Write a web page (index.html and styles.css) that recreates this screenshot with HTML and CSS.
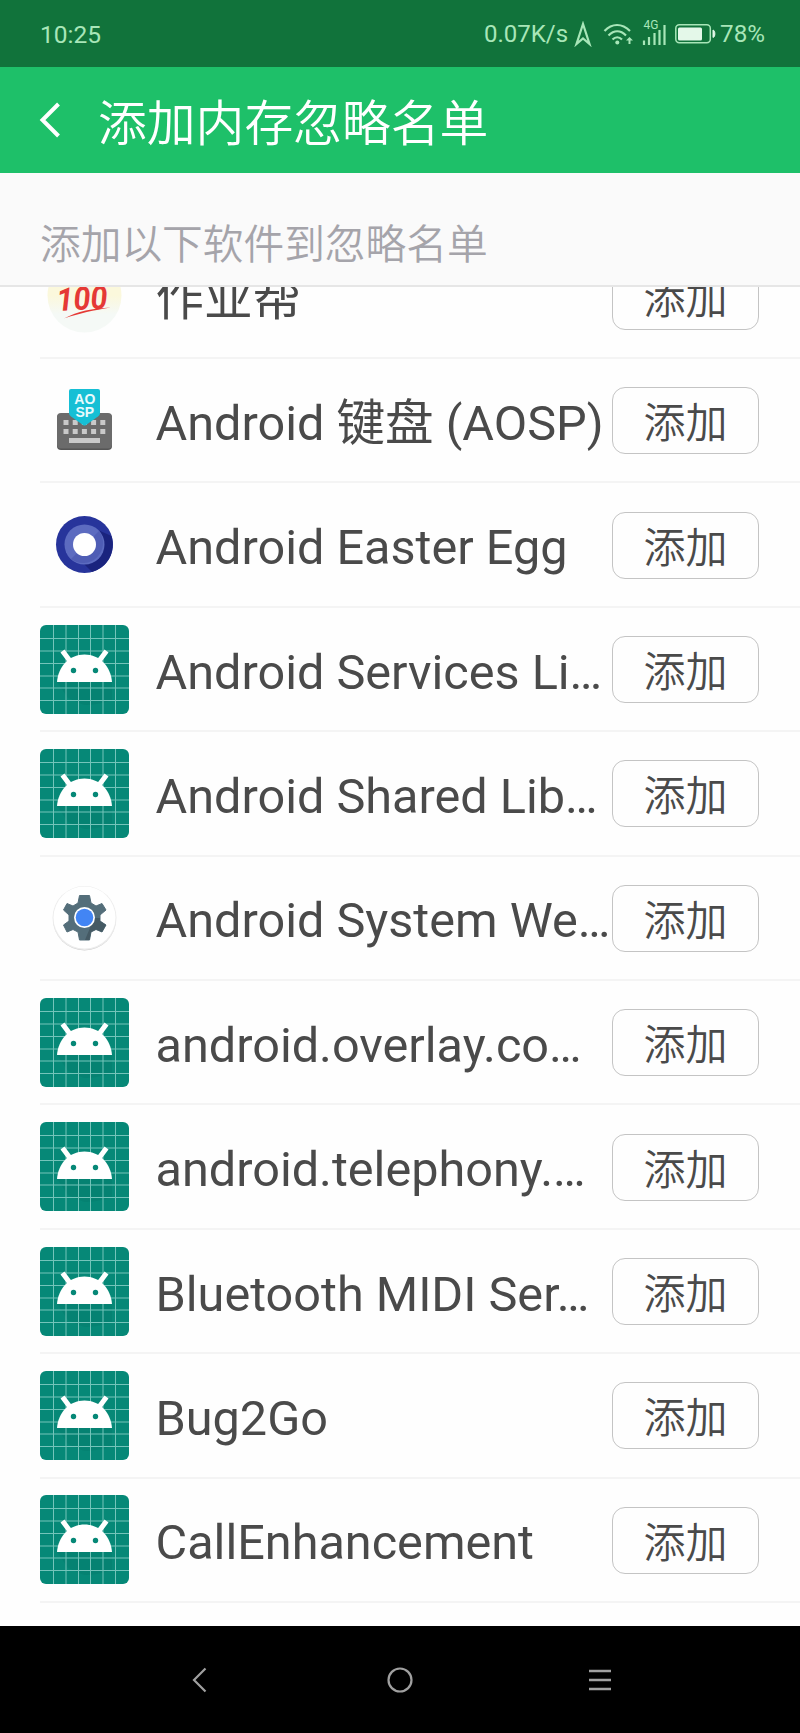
FILE: index.html
```html
<!DOCTYPE html>
<html lang="zh-CN">
<head>
    <meta charset="UTF-8">
    <meta name="viewport" content="width=device-width, initial-scale=1.0">
    <title>添加内存忽略名单</title>
    <link rel="stylesheet" href="styles.css">
</head>
<body>
    <!-- 图标定义 -->
    <svg class="icon-defs" width="0" height="0">
        <symbol id="icon-robot" viewBox="0 0 89 89">
            <rect width="89" height="89" rx="6" fill="#068877"/>
            <path d="M17 57H72V75Q58 80 44 80L28 73Z" fill="#047a6b" opacity=".4"/>
            <path d="M13.5 0V89M26 0V89M38.5 0V89M50.5 0V89M63 0V89M75.5 0V89M0 13.5H89M0 26H89M0 38.5H89M0 51H89M0 63H89M0 75.5H89" stroke="#74c4ba" stroke-width="1" fill="none"/>
            <path d="M24 28L30 36M65 28L59 36" stroke="#fff" stroke-width="5" stroke-linecap="square" fill="none"/>
            <path d="M17 57C18 42 29 29.500 44.500 29.500S71 42 72 57Z" fill="#fff"/>
            <circle cx="33.5" cy="45.5" r="2.7" fill="#068877"/>
            <circle cx="55.5" cy="45.5" r="2.7" fill="#068877"/>
        </symbol>
    </svg>

    <div class="status-bar">
        <span class="status-time">10:25</span>
        <div class="status-right">
            <span class="status-speed">0.07K/s</span>
            <svg class="status-nav" width="18" height="26" viewBox="0 0 18 26">
                <path d="M9 3L2.500 23L9 17.500L15.500 23Z" fill="none" stroke="#a8e6b8" stroke-width="2.2"/>
            </svg>
            <svg class="status-wifi" width="31" height="24" viewBox="0 0 31 24">
                <path d="M1.500 9C9 1 19 1 27 9M5.500 13.500C11 8 17.500 8 23 13.500M9.500 17.500C12.500 14.500 16 14.500 19 17.500" fill="none" stroke="#a8e6b8" stroke-width="2.2"/>
                <circle cx="14.3" cy="20.5" r="2" fill="#a8e6b8"/>
                <path d="M26.500 22V17" stroke="#a8e6b8" stroke-width="2"/>
                <path d="M23 18.500L26.500 15L30 18.500Z" fill="#a8e6b8"/>
            </svg>
            <svg class="status-signal" width="25" height="28" viewBox="0 0 25 28">
                <text x="1.5" y="11" class="signal-text">4G</text>
                <path d="M2 27V22.500M7 27V19M12.500 27V15M17.500 27V12M22.500 27V7" stroke="#a8e6b8" stroke-width="2.2"/>
            </svg>
            <svg class="status-battery" width="41" height="20" viewBox="0 0 41 20">
                <rect x="0.8" y="0.8" width="34.5" height="18" rx="3.5" fill="none" stroke="#a8e6b8" stroke-width="1.5"/>
                <rect x="3" y="3.5" width="24" height="13" rx="1.5" fill="#e4f8e9"/>
                <path d="M38 6C40.500 6.500 40.500 13 38 13.500Z" fill="#e4f8e9" stroke="#e4f8e9"/>
            </svg>
            <span class="status-percent">78%</span>
        </div>
    </div>

    <div class="header">
        <svg class="header-back" width="24" height="38" viewBox="0 0 24 38">
            <path d="M20.500 3L4.500 19L20.500 35" fill="none" stroke="#fff" stroke-width="4"/>
        </svg>
        <h1 class="header-title">添加内存忽略名单</h1>
    </div>

    <div class="section-title">添加以下软件到忽略名单</div>

    <div class="app-list">
        <div class="app-item">
            <svg class="app-icon" viewBox="0 0 89 89">
                <defs>
                    <linearGradient id="zyb" x1="0" y1="0" x2="0" y2="1">
                        <stop offset=".5" stop-color="#fbf8dc"/>
                        <stop offset=".75" stop-color="#f5f9f6"/>
                    </linearGradient>
                </defs>
                <circle cx="44.5" cy="44.5" r="37" fill="url(#zyb)"/>
                <text x="17" y="58.5" class="score-text" textLength="51" lengthAdjust="spacingAndGlyphs" transform="rotate(-3 44 58)">100</text>
                <path d="M24 67.500C38 60 52 57.500 71 56.500C53 59.500 40 62 24 67.500Z" fill="#e53935"/>
            </svg>
            <span class="app-name">作业帮</span>
            <button class="add-button">添加</button>
        </div>
        <div class="app-item">
            <svg class="app-icon" viewBox="0 0 89 89">
                <rect x="17" y="38" width="55" height="36" rx="4" fill="#555"/>
                <rect x="17" y="37" width="55" height="35.5" rx="4" fill="#6b6b6b"/>
                <path d="M23.500 46.500H65.500M23.500 55.500H65.500" stroke="#c9c9c9" stroke-width="5" stroke-dasharray="5 4.2" fill="none"/>
                <rect x="29" y="62" width="31" height="5" fill="#c9c9c9"/>
                <path d="M31 13H58Q60 13 60 15V37Q60 39 58 40.500L46 49Q44.500 50 43 49L31 40.500Q29 39 29 37V15Q29 13 31 13Z" fill="#16bfd5"/>
                <text x="44.8" y="28" class="aosp-text">AO</text>
                <text x="44.8" y="40.5" class="aosp-text">SP</text>
            </svg>
            <span class="app-name">Android 键盘 (AOSP)</span>
            <button class="add-button">添加</button>
        </div>
        <div class="app-item">
            <svg class="app-icon" viewBox="0 0 89 89">
                <circle cx="44.5" cy="44.5" r="28.5" fill="#27349b"/>
                <path d="M58 30L71.500 36A28.500 28.500 0 0 1 52 72L44 64Z" fill="#1a237e"/>
                <circle cx="44.5" cy="44.5" r="20" fill="#5c6bc0"/>
                <path d="M59 31A20 20 0 0 1 31 59Z" fill="#4f5db5"/>
                <circle cx="44.5" cy="44.5" r="11.5" fill="#fff"/>
            </svg>
            <span class="app-name">Android Easter Egg</span>
            <button class="add-button">添加</button>
        </div>
        <div class="app-item">
            <svg class="app-icon"><use href="#icon-robot"/></svg>
            <span class="app-name">Android Services Li…</span>
            <button class="add-button">添加</button>
        </div>
        <div class="app-item">
            <svg class="app-icon"><use href="#icon-robot"/></svg>
            <span class="app-name">Android Shared Lib…</span>
            <button class="add-button">添加</button>
        </div>
        <div class="app-item">
            <svg class="app-icon" viewBox="0 0 89 89">
                <circle cx="44.5" cy="46" r="31.5" fill="#cfcfcf"/>
                <circle cx="44.5" cy="45" r="32" fill="#ececec"/>
                <circle cx="44.5" cy="44.5" r="31" fill="#fff"/>
                <path d="M39.500 22.500H49.500L51 30L56 33L62 30.500L66 37L60 42V48L66 52L62 59L56 56.500L51 59L49.500 67H39.500L38 59L33 56.500L27 59L23.500 52L29 48V42L23.500 37L27 30.500L33 33L38 30Z" fill="#546e7a" stroke="#546e7a" stroke-linejoin="round"/>
                <path d="M55 45H60V48L66 52L62 59L56 56.500L51 59L49.500 67H45L52 50Z" fill="#455a64"/>
                <circle cx="44.5" cy="44.5" r="10.5" fill="#fff"/>
                <circle cx="44.5" cy="44.5" r="8.8" fill="#4285f4"/>
            </svg>
            <span class="app-name">Android System We…</span>
            <button class="add-button">添加</button>
        </div>
        <div class="app-item">
            <svg class="app-icon"><use href="#icon-robot"/></svg>
            <span class="app-name">android.overlay.co…</span>
            <button class="add-button">添加</button>
        </div>
        <div class="app-item">
            <svg class="app-icon"><use href="#icon-robot"/></svg>
            <span class="app-name">android.telephony.…</span>
            <button class="add-button">添加</button>
        </div>
        <div class="app-item">
            <svg class="app-icon"><use href="#icon-robot"/></svg>
            <span class="app-name">Bluetooth MIDI Ser…</span>
            <button class="add-button">添加</button>
        </div>
        <div class="app-item">
            <svg class="app-icon"><use href="#icon-robot"/></svg>
            <span class="app-name">Bug2Go</span>
            <button class="add-button">添加</button>
        </div>
        <div class="app-item">
            <svg class="app-icon"><use href="#icon-robot"/></svg>
            <span class="app-name">CallEnhancement</span>
            <button class="add-button">添加</button>
        </div>
    </div>

    <div class="nav-bar">
        <svg width="28" height="28" viewBox="0 0 28 28">
            <path d="M19.500 2.500L8 14L19.500 25.500" fill="none" stroke="#a0a0a0" stroke-width="2.2"/>
        </svg>
        <svg width="28" height="28" viewBox="0 0 28 28">
            <circle cx="14" cy="14" r="11.5" fill="none" stroke="#a0a0a0" stroke-width="2.2"/>
        </svg>
        <svg width="28" height="28" viewBox="0 0 28 28">
            <path d="M3 5H25M3 14H25M3 23H25" fill="none" stroke="#a0a0a0" stroke-width="2.6"/>
        </svg>
    </div>
</body>
</html>
```

FILE: styles.css
```css
* {
    margin: 0;
    padding: 0;
    box-sizing: border-box;
}

body {
    width: 800px;
    height: 1733px;
    display: flex;
    flex-direction: column;
    overflow: hidden;
    background-color: #fefefe;
    color: #4a4a4a;
    font-family: Roboto, "Noto Sans CJK SC", sans-serif;
}

svg {
    display: block;
    flex: none;
}

.icon-defs {
    position: absolute;
}

/* 状态栏 */
.status-bar {
    flex: none;
    height: 67px;
    padding: 1px 35px 0 40px;
    display: flex;
    align-items: center;
    justify-content: space-between;
    background-color: #11733b;
    color: #a8e6b8;
    font-size: 24.5px;
    font-weight: 400;
}

.status-right {
    display: flex;
    align-items: center;
}

.status-speed {
    font-size: 24px;
}

.status-nav {
    margin-left: 6px;
}

.status-wifi {
    margin-left: 11px;
}

.status-signal {
    margin: -4px 0 0 8px;
}

.signal-text {
    font-size: 12px;
    font-weight: 400;
    fill: #a8e6b8;
}

.status-battery {
    margin-left: 8px;
}

.status-percent {
    margin-left: 4px;
    font-size: 24.2px;
}

/* 标题栏 */
.header {
    flex: none;
    height: 106px;
    padding-left: 38px;
    display: flex;
    align-items: center;
    background-color: #1ec069;
    color: white;
}

.header-title {
    margin: 10px 0 0 36px;
    font-size: 48.8px;
    font-weight: 350;
    line-height: 1;
}

.section-title {
    flex: none;
    height: 114px;
    padding: 33px 40px 0;
    display: flex;
    align-items: center;
    background-color: #fafafa;
    border-bottom: 2px solid #e6e6e6;
    color: #a5a4aa;
    font-size: 40.7px;
    font-weight: 350;
    line-height: 1;
}

/* 应用列表 */
.app-list {
    flex: 1;
    min-height: 0;
    padding-bottom: 23px;
    display: flex;
    flex-direction: column;
    justify-content: flex-end;
    overflow: hidden;
}

.app-item {
    flex: none;
    height: 124.4px;
    margin-left: 40px;
    padding-right: 41px;
    display: flex;
    align-items: center;
    border-bottom: 2px solid #f4f4f4;
}

.app-icon {
    width: 89px;
    height: 89px;
}

.app-name {
    flex: 1;
    min-width: 0;
    margin-left: 26.5px;
    padding-top: 7px;
    font-size: 48.6px;
    line-height: 60px;
    white-space: nowrap;
}

.add-button {
    flex: none;
    width: 147px;
    height: 67px;
    margin-top: 1px;
    padding-top: 7px;
    border: 1.5px solid #c4c4c4;
    border-radius: 13px;
    background-color: #fefefe;
    color: #4a4a4a;
    font-family: inherit;
    font-size: 42px;
    font-weight: 350;
    line-height: 1;
}

.score-text {
    font-size: 32px;
    font-weight: 700;
    font-style: italic;
    fill: #e53935;
}

.aosp-text {
    font-family: "Liberation Sans", sans-serif;
    font-size: 14px;
    font-weight: 700;
    text-anchor: middle;
    fill: #e8fbfd;
}

/* 底部导航 */
.nav-bar {
    flex: none;
    height: 107px;
    padding: 0 100px;
    display: flex;
    align-items: center;
    justify-content: space-around;
    background-color: #000;
}
```
